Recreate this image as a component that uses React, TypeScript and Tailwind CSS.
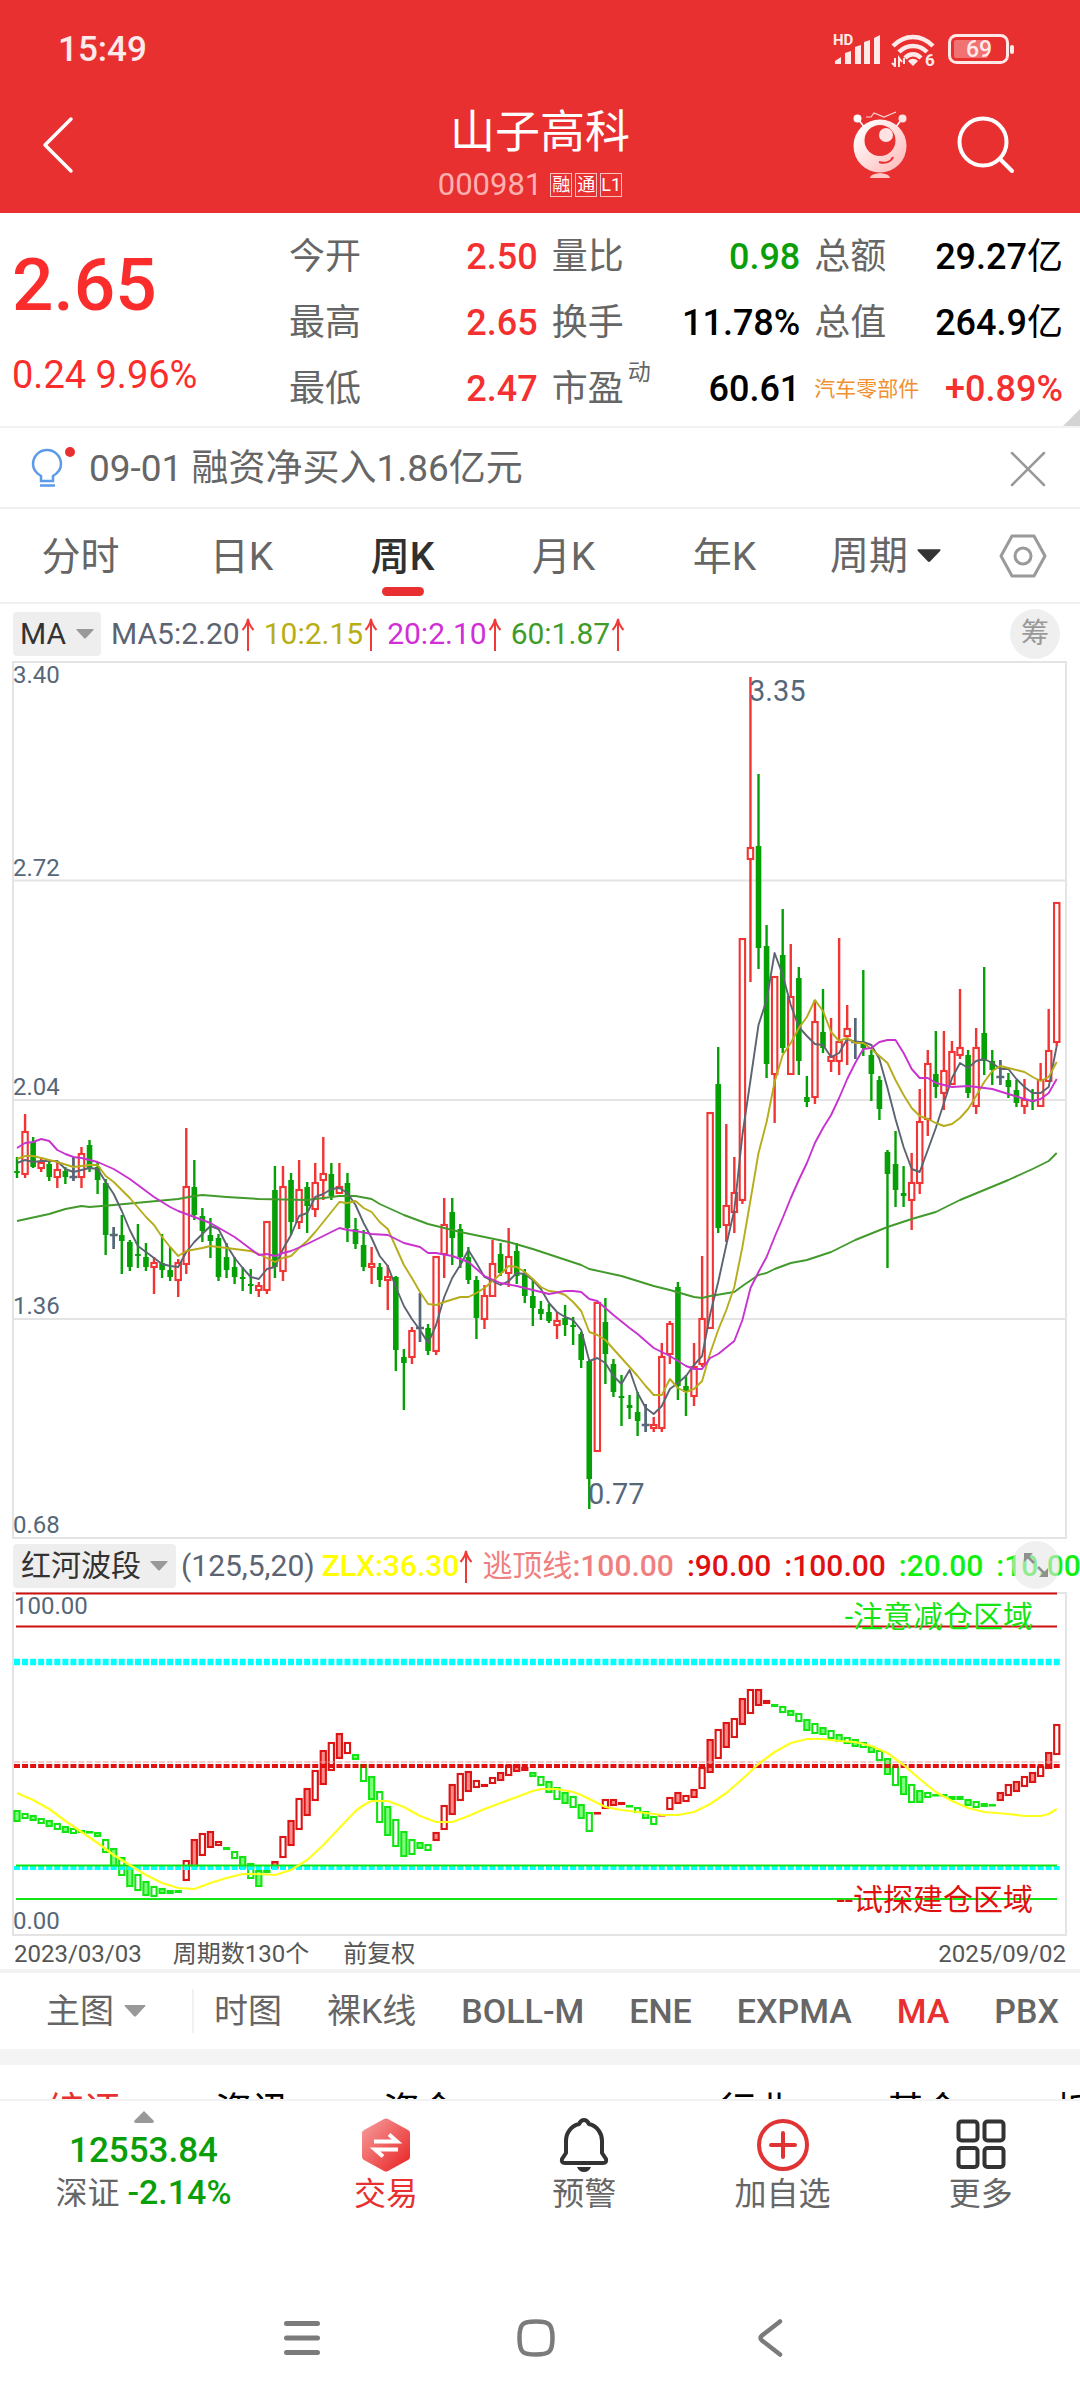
import { useState } from "react";
import type { ReactNode } from "react";

type Tone = "r" | "g" | "d";
// tone, high, body top, body bottom, low
type Candle = [Tone, number, number, number, number];
// tone, top, bottom
type Bar = [Tone, number, number];
// week index, y
type Pt = [number, number];

const CANDLES: Candle[] = [
  ["g", 497, 511, 513, 518], ["r", 454, 472, 514, 518], ["g", 477, 482, 507, 508], ["r", 497, 503, 508, 512], ["g", 501, 504, 517, 521],
  ["r", 501, 510, 517, 528], ["g", 507, 511, 517, 524], ["d", 497, 517, 517, 521], ["r", 487, 494, 517, 528], ["g", 480, 485, 508, 512],
  ["g", 502, 507, 520, 534], ["g", 519, 523, 575, 595], ["d", 567, 575, 575, 589], ["g", 555, 575, 581, 614], ["g", 580, 582, 607, 611],
  ["g", 564, 594, 596, 608], ["g", 583, 597, 607, 611], ["r", 597, 603, 607, 634], ["g", 574, 603, 610, 618], ["g", 587, 610, 617, 621],
  ["r", 599, 603, 620, 637], ["r", 468, 527, 604, 614], ["g", 500, 527, 555, 560], ["g", 548, 556, 571, 582], ["g", 558, 575, 581, 598],
  ["g", 574, 578, 617, 621], ["g", 583, 597, 610, 618], ["g", 597, 607, 617, 624], ["g", 607, 617, 619, 631], ["g", 609, 624, 626, 634],
  ["r", 622, 626, 630, 637], ["r", 562, 562, 630, 634], ["g", 506, 530, 607, 618], ["r", 506, 527, 611, 621], ["g", 513, 520, 562, 575],
  ["r", 500, 530, 562, 569], ["g", 522, 527, 546, 573], ["r", 503, 523, 549, 557], ["r", 477, 514, 520, 540], ["g", 503, 514, 536, 540],
  ["r", 503, 527, 533, 534], ["g", 513, 523, 568, 582], ["g", 558, 569, 584, 589], ["g", 570, 585, 607, 611], ["r", 587, 604, 607, 624],
  ["g", 603, 607, 620, 627], ["r", 605, 617, 620, 650], ["g", 616, 617, 690, 711], ["g", 689, 697, 703, 750], ["r", 667, 671, 697, 704],
  ["d", 633, 668, 668, 682], ["g", 664, 668, 691, 695], ["r", 597, 597, 691, 695], ["r", 538, 565, 594, 618], ["g", 538, 552, 578, 605],
  ["g", 564, 569, 597, 608], ["g", 587, 597, 620, 624], ["g", 616, 620, 658, 679], ["r", 625, 636, 659, 669], ["r", 580, 604, 636, 637],
  ["g", 583, 594, 613, 616], ["r", 568, 597, 613, 627], ["g", 583, 591, 616, 624], ["g", 609, 614, 636, 643], ["g", 619, 636, 648, 666],
  ["g", 641, 649, 654, 660], ["g", 644, 652, 661, 663], ["r", 652, 661, 665, 679], ["g", 645, 658, 665, 676], ["g", 657, 665, 667, 685],
  ["g", 672, 674, 700, 708], ["g", 700, 701, 819, 849], ["r", 642, 643, 791, 791], ["g", 638, 662, 694, 724], ["g", 699, 704, 732, 737],
  ["g", 715, 736, 738, 766], ["g", 735, 745, 748, 759], ["g", 732, 752, 761, 776], ["d", 744, 765, 765, 772], ["r", 757, 765, 768, 772],
  ["r", 683, 697, 768, 772], ["r", 661, 664, 694, 704], ["g", 622, 627, 726, 740], ["g", 715, 726, 732, 756], ["r", 683, 707, 736, 746],
  ["r", 596, 659, 704, 707], ["r", 453, 453, 668, 668], ["g", 387, 424, 568, 573], ["r", 464, 546, 565, 582], ["r", 497, 533, 552, 573],
  ["r", 279, 279, 540, 544], ["r", 17, 188, 199, 322], ["g", 114, 186, 288, 309], ["g", 265, 286, 404, 418], ["r", 317, 317, 414, 463],
  ["g", 249, 295, 388, 393], ["r", 284, 337, 414, 414], ["g", 307, 318, 401, 415], ["g", 416, 437, 442, 447], ["r", 340, 362, 437, 444],
  ["g", 329, 372, 388, 393], ["r", 358, 397, 401, 412], ["r", 278, 382, 401, 415], ["r", 345, 369, 376, 405], ["d", 358, 382, 382, 399],
  ["g", 310, 383, 388, 396], ["g", 390, 395, 414, 441], ["g", 416, 420, 449, 460], ["g", 490, 492, 514, 608], ["g", 471, 504, 530, 547],
  ["g", 506, 533, 536, 547], ["r", 493, 523, 540, 570], ["r", 429, 462, 523, 534], ["r", 390, 404, 459, 476], ["g", 371, 414, 427, 438],
  ["r", 371, 411, 433, 450], ["r", 381, 392, 424, 424], ["r", 329, 388, 395, 399], ["g", 390, 395, 433, 438], ["r", 368, 388, 446, 454],
  ["g", 307, 373, 401, 415], ["g", 390, 401, 410, 425], ["d", 400, 417, 417, 425], ["g", 413, 420, 427, 438], ["g", 420, 430, 443, 447],
  ["r", 419, 440, 446, 454], ["g", 429, 440, 442, 450], ["r", 403, 420, 446, 446], ["r", 349, 391, 421, 421], ["r", 243, 243, 382, 386],
];

const MA5: Pt[] = [
  [0, 503], [1, 500], [2, 502], [3, 501], [5, 501], [6, 509], [7, 512], [8, 510], [9, 508], [10, 509], [11, 522], [12, 534], [13, 551], [14, 570],
  [15, 586], [16, 592], [17, 598], [18, 604], [19, 606], [20, 607], [21, 592], [22, 582], [23, 574], [24, 566], [25, 569], [26, 585], [27, 598],
  [28, 608], [29, 617], [30, 619], [31, 609], [32, 607], [33, 589], [34, 575], [35, 556], [36, 553], [37, 537], [38, 534], [39, 529], [40, 528],
  [41, 533], [42, 545], [43, 563], [44, 578], [45, 596], [46, 606], [47, 627], [48, 646], [49, 659], [50, 670], [51, 683], [52, 665], [53, 637],
  [54, 618], [55, 605], [56, 590], [57, 603], [58, 617], [59, 621], [60, 625], [61, 621], [62, 613], [63, 614], [64, 620], [65, 629], [66, 643],
  [67, 652], [68, 657], [69, 660], [70, 670], [71, 701], [72, 698], [73, 703], [74, 716], [75, 724], [76, 710], [77, 733], [78, 748], [79, 754],
  [80, 746], [81, 729], [82, 723], [83, 716], [84, 705], [85, 696], [86, 654], [87, 622], [88, 585], [89, 550], [90, 475], [91, 420], [92, 365],
  [93, 340], [94, 293], [95, 315], [96, 345], [97, 367], [98, 376], [99, 384], [100, 385], [101, 397], [102, 393], [103, 379], [104, 382],
  [105, 382], [106, 385], [107, 399], [108, 428], [109, 459], [110, 487], [111, 509], [112, 512], [113, 490], [114, 468], [115, 443], [116, 418],
  [117, 403], [118, 408], [119, 401], [120, 399], [121, 403], [122, 409], [123, 409], [124, 419], [125, 427], [126, 433], [127, 433], [128, 427],
  [129, 386],
];

const MA10: Pt[] = [
  [0, 499], [1, 496], [2, 496], [3, 498], [5, 502], [7, 507], [8, 506], [9, 505], [10, 505], [11, 516], [12, 522], [14, 538], [16, 557], [17, 565],
  [18, 577], [19, 587], [20, 596], [21, 591], [23, 588], [24, 586], [26, 588], [29, 591], [30, 594], [31, 598], [32, 602], [33, 598], [34, 596],
  [35, 588], [36, 581], [37, 572], [38, 562], [40, 542], [41, 543], [42, 541], [43, 548], [44, 552], [45, 562], [46, 569], [47, 587], [48, 605],
  [49, 618], [50, 632], [51, 644], [52, 645], [53, 642], [55, 637], [56, 637], [57, 633], [58, 628], [59, 621], [60, 614], [61, 606], [62, 607],
  [63, 612], [64, 619], [65, 627], [66, 631], [67, 632], [68, 635], [69, 642], [70, 651], [71, 672], [72, 675], [73, 680], [74, 689], [76, 707],
  [77, 716], [78, 726], [79, 735], [80, 735], [81, 719], [82, 728], [83, 732], [84, 729], [85, 721], [86, 693], [87, 670], [88, 650], [89, 627],
  [90, 587], [91, 540], [92, 493], [93, 462], [94, 422], [95, 395], [96, 383], [97, 368], [98, 357], [99, 340], [100, 351], [101, 372], [102, 381],
  [103, 378], [104, 383], [105, 383], [106, 389], [107, 396], [108, 403], [109, 420], [110, 435], [111, 448], [112, 456], [113, 459], [114, 463],
  [115, 466], [116, 464], [117, 458], [118, 449], [119, 436], [120, 422], [121, 411], [122, 406], [123, 408], [124, 410], [125, 412], [126, 417],
  [127, 421], [128, 417], [129, 402],
];

const MA20: Pt[] = [
  [0, 488], [1, 483], [2, 482], [3, 479], [4, 481], [5, 490], [6, 494], [7, 497], [8, 498], [10, 502], [12, 509], [14, 519], [17, 537], [19, 547],
  [20, 551], [22, 557], [24, 563], [27, 577], [29, 589], [30, 595], [31, 594], [32, 596], [33, 593], [34, 591], [36, 584], [38, 576], [40, 568],
  [41, 570], [42, 571], [44, 574], [46, 575], [48, 583], [50, 587], [51, 593], [52, 593], [54, 596], [56, 602], [58, 616], [60, 623], [62, 626],
  [64, 630], [66, 634], [68, 631], [69, 631], [70, 632], [71, 639], [72, 641], [74, 655], [76, 668], [77, 674], [79, 688], [81, 696], [83, 706],
  [84, 709], [85, 709], [86, 698], [87, 694], [89, 681], [90, 660], [91, 628], [92, 612], [93, 597], [94, 577], [95, 558], [96, 538], [97, 520],
  [98, 503], [99, 483], [100, 468], [101, 455], [102, 438], [103, 419], [104, 403], [105, 389], [106, 388], [107, 382], [108, 380], [109, 380],
  [110, 393], [111, 409], [112, 418], [113, 418], [114, 423], [116, 427], [118, 426], [121, 429], [123, 434], [125, 439], [126, 441], [127, 439],
  [128, 433], [129, 419],
];

const MA60: Pt[] = [
  [0, 561], [4, 554], [6, 549], [8, 546], [9, 547], [12, 545], [16, 542], [20, 539], [22, 536], [23, 535], [26, 537], [30, 539], [36, 540], [38, 538],
  [40, 536], [42, 536], [44, 539], [45, 544], [48, 555], [51, 564], [55, 572], [58, 577], [61, 582], [64, 589], [70, 605], [71, 609], [75, 616],
  [79, 626], [81, 630], [84, 637], [85, 638], [86, 636], [89, 632], [90, 626], [92, 615], [93, 613], [94, 609], [96, 603], [98, 600], [101, 592],
  [104, 580], [108, 567], [111, 559], [114, 552], [117, 540], [120, 530], [123, 520], [126, 509], [128, 501], [129, 493],
];

const BARS: Bar[] = [
  ["g", 220, 232], ["g", 223, 229], ["g", 225, 231], ["g", 228, 234], ["g", 230, 237], ["g", 233, 240], ["g", 236, 243], ["g", 238, 244],
  ["g", 240, 243], ["g", 241, 243], ["g", 242, 247], ["g", 249, 263], ["g", 258, 277], ["g", 267, 286], ["g", 276, 297], ["g", 284, 301],
  ["g", 291, 306], ["g", 296, 307], ["g", 298, 304], ["g", 300, 304], ["g", 300, 303], ["r", 270, 291], ["r", 249, 277], ["r", 243, 266],
  ["r", 241, 258], ["r", 251, 256], ["g", 257, 260], ["g", 261, 269], ["g", 266, 279], ["g", 273, 289], ["g", 280, 297], ["g", 280, 283],
  ["r", 271, 279], ["r", 246, 268], ["r", 230, 256], ["r", 208, 240], ["r", 198, 226], ["r", 180, 211], ["r", 160, 195], ["r", 152, 181],
  ["r", 143, 169], ["r", 152, 164], ["g", 164, 170], ["g", 174, 192], ["g", 186, 210], ["g", 201, 233], ["g", 216, 246], ["g", 229, 257],
  ["g", 241, 267], ["g", 249, 265], ["g", 252, 259], ["g", 254, 261], ["r", 242, 251], ["r", 215, 240], ["r", 194, 225], ["r", 183, 211],
  ["r", 181, 202], ["r", 190, 198], ["r", 194, 197], ["r", 187, 194], ["r", 182, 191], ["r", 175, 186], ["r", 174, 182], ["r", 177, 181],
  ["g", 182, 187], ["g", 186, 196], ["g", 191, 203], ["g", 197, 210], ["g", 202, 214], ["g", 206, 218], ["g", 214, 229], ["g", 222, 242],
  ["r", 222, 224], ["r", 209, 219], ["r", 209, 216], ["r", 212, 215], ["g", 215, 217], ["g", 217, 223], ["g", 221, 229], ["g", 226, 235],
  ["r", 224, 226], ["r", 207, 220], ["r", 202, 214], ["r", 205, 212], ["r", 199, 208], ["r", 177, 199], ["r", 149, 183], ["r", 139, 169],
  ["r", 132, 158], ["r", 128, 148], ["r", 108, 135], ["r", 99, 124], ["r", 99, 116], ["r", 110, 114], ["g", 114, 117], ["g", 116, 123],
  ["g", 120, 126], ["g", 123, 132], ["g", 129, 141], ["g", 133, 144], ["g", 137, 145], ["g", 140, 149], ["g", 144, 152], ["g", 147, 154],
  ["g", 149, 157], ["g", 152, 158], ["g", 156, 163], ["g", 160, 171], ["g", 168, 185], ["g", 176, 196], ["g", 186, 205], ["g", 194, 213],
  ["g", 200, 213], ["g", 202, 208], ["g", 204, 206], ["g", 204, 206], ["g", 206, 210], ["g", 206, 210], ["g", 209, 216], ["g", 211, 218],
  ["g", 213, 217], ["g", 214, 215], ["r", 202, 211], ["r", 194, 206], ["r", 191, 202], ["r", 186, 197], ["r", 182, 193], ["r", 176, 187],
  ["r", 162, 179], ["r", 134, 165],
];

const ZLX: Pt[] = [
  [0, 203], [2, 210], [4, 219], [6, 231], [8, 242], [10, 253], [12, 265], [14, 275], [16, 285], [18, 293], [20, 298], [22, 299], [24, 293], [26, 288],
  [28, 284], [30, 284], [32, 285], [34, 280], [36, 270], [38, 255], [40, 238], [42, 221], [43, 215], [44, 211], [46, 211], [48, 217], [50, 226],
  [52, 232], [54, 232], [56, 226], [58, 219], [60, 213], [62, 207], [64, 201], [65, 199], [67, 199], [69, 202], [70, 205], [72, 213], [73, 217],
  [75, 220], [78, 223], [80, 225], [82, 225], [84, 222], [86, 214], [88, 203], [90, 189], [92, 174], [94, 162], [96, 153], [98, 149], [100, 149],
  [102, 151], [104, 152], [106, 156], [108, 163], [110, 175], [112, 189], [114, 202], [116, 211], [118, 218], [120, 222], [123, 224], [125, 226],
  [127, 226], [128, 224], [129, 219],
];

const STEP = 8.06;
const xAt = (i: number) => 17 + STEP * i;
const toPoints = (pts: Pt[]) => pts.map(([i, y]) => `${xAt(i).toFixed(1)},${y}`).join(" ");

const QUOTES: { label: string; sup?: string; value: string; unit?: string; color: string; small?: boolean }[] = [
  { label: "今开", value: "2.50", color: "text-[#f43030]" },
  { label: "量比", value: "0.98", color: "text-[#0a9f0a]" },
  { label: "总额", value: "29.27", unit: "亿", color: "text-black" },
  { label: "最高", value: "2.65", color: "text-[#f43030]" },
  { label: "换手", value: "11.78%", color: "text-black" },
  { label: "总值", value: "264.9", unit: "亿", color: "text-black" },
  { label: "最低", value: "2.47", color: "text-[#f43030]" },
  { label: "市盈", sup: "动", value: "60.61", color: "text-black" },
  { label: "汽车零部件", value: "+0.89%", color: "text-[#f43030]", small: true },
];

const PERIODS = ["分时", "日K", "周K", "月K", "年K"];

const MAS = [
  { text: "MA5:2.20", color: "text-[#5c6472]" },
  { text: "10:2.15", color: "text-[#b8ae14]" },
  { text: "20:2.10", color: "text-[#d02ed6]" },
  { text: "60:1.87", color: "text-[#3f9c28]" },
];

const INDICATORS = [
  { name: "时图", latin: false },
  { name: "裸K线", latin: false },
  { name: "BOLL-M", latin: true },
  { name: "ENE", latin: true },
  { name: "EXPMA", latin: true },
  { name: "MA", latin: true },
  { name: "PBX", latin: true },
];

export default function App() {
  return (
    <div className="flex min-h-screen w-full flex-col overflow-x-hidden bg-white font-[Roboto,'Noto_Sans_CJK_SC',sans-serif] text-[#666]">
      <Header />
      <main>
        <Quote />
        <Tip />
        <PeriodTabs />
        <MainLegend />
        <KLine />
        <SubLegend />
        <WaveChart />
        <div className="flex h-[35px] items-center border-b-4 border-[#f2f2f2] px-[14px] text-[24px] leading-[28px] text-[#555]">
          <span>2023/03/03</span>
          <span className="ml-[31px]">周期数130个</span>
          <span className="ml-[34px]">前复权</span>
          <span className="ml-auto">2025/09/02</span>
        </div>
        <IndicatorTabs />
        <div className="h-4 bg-[#f4f4f4]" />
        <NewsTabs />
      </main>
      <BottomBar />
      <SystemNav />
    </div>
  );
}

function Header() {
  return (
    <header className="h-[213px] bg-[#e83030] text-white">
      <div className="flex h-[100px] items-center justify-between pr-[65px] pl-[58px]">
        <span className="text-[35px] font-medium text-white/90">15:49</span>
        <StatusIcons />
      </div>
      <div className="grid grid-cols-[1fr_auto_1fr] items-start pt-[5px]">
        <button aria-label="返回" className="mt-[11px] ml-[42px] w-[32px]">
          <svg viewBox="0 0 32 58" className="w-full" fill="none" stroke="#fff" strokeWidth="3.5" strokeLinecap="round" strokeLinejoin="round">
            <path d="M29 3 3 29l26 26" />
          </svg>
        </button>
        <div className="flex flex-col items-center">
          <h1 className="text-[45px] leading-[56px]">山子高科</h1>
          <div className="mt-[6px] flex items-center gap-[3px] pr-[20px] leading-[36px]">
            <span className="mr-[5px] text-[31px] text-[#ffb0b0]">000981</span>
            {["融", "通", "L1"].map((t) => (
              <span key={t} className="flex h-[24px] w-[22px] items-center justify-center border border-white/70 text-[18px] leading-[22px]">{t}</span>
            ))}
          </div>
        </div>
        <div className="mt-[6px] flex items-center justify-end gap-[50px] pr-[65px]">
          <button aria-label="智能助手"><Robot /></button>
          <button aria-label="搜索">
            <svg width="58" height="58" viewBox="0 0 58 58" fill="none" stroke="#fff" strokeWidth="4" strokeLinecap="round">
              <circle cx="26" cy="26" r="23.5" />
              <path d="m43 43 12 12" />
            </svg>
          </button>
        </div>
      </div>
    </header>
  );
}

function StatusIcons() {
  return (
    <svg width="182" height="34" viewBox="0 0 182 34" fill="#ffe9e9">
      <text x="0" y="12" fontSize="15" fontWeight="700">HD</text>
      <path d="M2 31v-3l6-4v7zM12 31V20l6-2v13zM22 31V14l6-2v19zM31 31V9l6-2v24zM41 31V5l6-3v29z" />
      <g fill="none" stroke="#ffe9e9" strokeWidth="4.5">
        <path d="M60 13c12-12 28-12 40 0" />
        <path d="M66 19c8-8 20-8 28 0" />
        <path d="M72 25c5-5 11-5 16 0" />
      </g>
      <path d="M75 28c3-3 7-3 10 0l-5 5z" />
      <path d="M62 25v9M59 30l3 3M66 34v-9l3 4M71 25v6" stroke="#ffe9e9" strokeWidth="2" fill="none" />
      <text x="92" y="33" fontSize="17" fontWeight="700">6</text>
      <rect x="116.5" y="2.5" width="58" height="27" rx="7" fill="none" stroke="#ffe9e9" strokeWidth="3" />
      <rect x="121" y="7" width="34" height="18" rx="2" fill="#f07272" />
      <rect x="177" y="12" width="4" height="9" rx="2" />
      <text x="146" y="24" fontSize="23" fontWeight="500" textAnchor="middle">69</text>
    </svg>
  );
}

function Robot() {
  return (
    <svg width="54" height="68" viewBox="0 0 54 68">
      <defs>
        <linearGradient id="robot" x1="0" y1="0" x2="1" y2="1">
          <stop offset="0.1" stopColor="#fff" />
          <stop offset="1" stopColor="#ffb5b5" />
        </linearGradient>
      </defs>
      <g fill="none" stroke="#fff">
        <path d="m5 8 7 9M49 8l-7 9" strokeWidth="1.5" />
        <path d="M13 6h5l3-4 10 4 12-5" strokeWidth="1.2" opacity="0.8" />
      </g>
      <circle cx="4.5" cy="7.5" r="4" fill="#fff" />
      <circle cx="49.5" cy="7.5" r="4" fill="#ffe3e3" />
      <circle cx="27" cy="35" r="26.5" fill="url(#robot)" />
      <circle cx="27" cy="29.5" r="15.5" fill="#e83030" />
      <circle cx="33" cy="24" r="7" fill="#ffe3e3" />
      <path d="M26 51c6 2 12 0 14-5" fill="none" stroke="#e83030" strokeWidth="2" />
      <path d="M17 67q0-4 10-5 10 1 10 5z" fill="#ffc9c9" />
    </svg>
  );
}

function Quote() {
  return (
    <section className="relative flex h-[215px] border-b-2 border-[#f2f2f2]">
      <div className="w-[289px] shrink-0 pt-[32px] pl-[12px] text-[#fa2c2c]">
        <div className="text-[73px] leading-[80px] font-medium">2.65</div>
        <div className="mt-[28px] text-[38px] leading-[44px]">0.24 9.96%</div>
      </div>
      <dl className="grid flex-1 grid-cols-3 content-start gap-x-[14px] pt-[11px] pr-[17px] text-[36px] leading-[66px]">
        {QUOTES.map((q) => (
          <div key={q.label} className="flex justify-between whitespace-nowrap">
            <dt className={q.small ? "text-[21px] text-[#f09030]" : "flex text-[#666]"}>
              {q.label}
              {q.sup && <span className="ml-[4px] text-[23px] leading-[34px]">{q.sup}</span>}
            </dt>
            <dd className={q.color}><span className="font-medium">{q.value}</span>{q.unit}</dd>
          </div>
        ))}
      </dl>
      <svg className="absolute right-0 bottom-0" width="17" height="17" viewBox="0 0 17 17"><path d="M17 0v17H0z" fill="#d4d4d4" /></svg>
    </section>
  );
}

function Tip() {
  return (
    <section className="flex h-[81px] items-center border-b-2 border-[#f0f0f0] pt-[2px] pr-[34px] pl-[31px]">
      <svg width="46" height="44" viewBox="0 0 46 44" fill="none" stroke="#5b9bea" strokeWidth="2.5">
        <path d="M10 34v-5C5 26 2 22 2 17a14 14 0 0 1 28 0c0 5-3 9-8 12v5zM9 38.5h15" />
        <circle cx="39" cy="5" r="5" fill="#e83030" stroke="none" />
      </svg>
      <p className="ml-[12px] text-[37px] leading-[44px]">09-01 融资净买入1.86亿元</p>
      <button aria-label="关闭" className="ml-auto">
        <svg width="36" height="36" viewBox="0 0 36 36" stroke="#999" strokeWidth="2.5" strokeLinecap="round"><path d="m2 2 32 32M34 2 2 34" /></svg>
      </button>
    </section>
  );
}

function PeriodTabs() {
  const [active, setActive] = useState("周K");
  return (
    <nav className="flex h-[95px] border-b-2 border-[#f0f0f0] text-[39px] leading-[96px]">
      {PERIODS.map((p) => (
        <button key={p} onClick={() => setActive(p)} className={`relative w-[161px] shrink-0 ${active === p ? "font-medium text-[#303030]" : "text-[#666]"}`}>
          {p}
          {active === p && <span className="absolute bottom-[6px] left-1/2 h-[9px] w-[42px] -translate-x-1/2 rounded-full bg-[#e83030]" />}
        </button>
      ))}
      <div className="flex w-[161px] shrink-0 items-center justify-center">
        <Picker label="更多周期" value="周期" className="pr-[32px]" caret="fill-[#333]" size={24} />
      </div>
      <button aria-label="图表设置" className="flex flex-1 items-center justify-center">
        <svg width="48" height="44" viewBox="0 0 48 44" fill="none" stroke="#9a9a9a" strokeWidth="3" strokeLinejoin="round">
          <path d="M13 2h22l11 20-11 20H13L2 22z" />
          <circle cx="24" cy="22" r="8" />
        </svg>
      </button>
    </nav>
  );
}

function Picker({ label, value, className, caret = "fill-[#999]", size = 18 }: { label: string; value: string; className: string; caret?: string; size?: number }) {
  return (
    <div className="relative flex items-center">
      <select aria-label={label} className={`appearance-none bg-transparent outline-none ${className}`}>
        <option>{value}</option>
      </select>
      <svg width={size} height={size} viewBox="0 0 18 18" className={`pointer-events-none absolute right-0 ${caret}`}>
        <path d="M1 4h16q1 0 .5 1l-7.5 8q-1 1-2 0L.5 5Q0 4 1 4z" />
      </svg>
    </div>
  );
}

function Up() {
  return (
    <svg width="14" height="34" viewBox="0 0 14 34" fill="none" stroke="#f03a3a" strokeWidth="2" className="shrink-0">
      <path d="M7 34V2M1.5 13Q6 8 7 2q1 6 5.5 11" />
    </svg>
  );
}

function MainLegend() {
  return (
    <div className="flex h-[56px] items-center pt-[4px] pr-[20px] pl-[13px] text-[30px] leading-[44px]">
      <div className="rounded bg-[#eee] px-[7px] text-[#333]">
        <Picker label="主图指标" value="MA" className="pr-[27px]" />
      </div>
      <div className="ml-[10px] flex gap-[9px]">
        {MAS.map((m) => (
          <span key={m.text} className={`flex items-center gap-[1px] ${m.color}`}>{m.text}<Up /></span>
        ))}
      </div>
      <button className="ml-auto size-[50px] rounded-full bg-[#efefef] text-[28px] leading-[50px] text-[#999]">筹</button>
    </div>
  );
}

const CANDLE_COLOR = { r: "#f23434", g: "#05a005", d: "#566778" };

function KLine() {
  return (
    <svg viewBox="0 0 1080 879" className="block w-full" role="img" aria-label="周K线图">
      <g fill="none" stroke="#e4e4e4" strokeWidth="2">
        <rect x="13" y="2" width="1053" height="876" />
        <path d="M13 220.5h1053M13 440h1053M13 659h1053" />
      </g>
      <g fill="#566778" fontSize="24">
        <text x="13" y="23">3.40</text>
        <text x="13" y="216">2.72</text>
        <text x="13" y="435">2.04</text>
        <text x="13" y="654">1.36</text>
        <text x="13" y="873">0.68</text>
      </g>
      {CANDLES.map(([t, high, top, bottom, low], i) => {
        const x = xAt(i);
        const c = CANDLE_COLOR[t];
        return (
          <g key={i} stroke={c} strokeWidth="2.4" fill="none">
            <path d={`M${x} ${high}V${top}M${x} ${bottom}V${low}`} />
            {t === "r" && <rect x={x - 2.7} y={top} width="5.4" height={bottom - top} strokeWidth="2.1" />}
            {t === "g" && <rect x={x - 2.8} y={top} width="5.6" height={Math.max(bottom - top, 2)} fill={c} stroke="none" />}
            {t === "d" && <path d={`M${x} ${high}V${low}M${x - 4} ${top}h8`} />}
          </g>
        );
      })}
      <g fill="none" strokeWidth="1.9" strokeLinejoin="round">
        <polyline points={toPoints(MA60)} stroke="#429a2c" />
        <polyline points={toPoints(MA5)} stroke="#5c6472" />
        <polyline points={toPoints(MA10)} stroke="#b6ac1c" />
        <polyline points={toPoints(MA20)} stroke="#c833d0" />
      </g>
      <g fill="#566778" fontSize="29">
        <text x="749" y="41">3.35</text>
        <text x="588" y="844">0.77</text>
      </g>
    </svg>
  );
}

function SubLegend() {
  return (
    <div className="relative flex h-[51px] items-center overflow-hidden pt-[2px] pl-[13px] text-[30px] leading-[44px] whitespace-nowrap">
      <div className="rounded bg-[#eee] px-[8px] text-[#333]">
        <Picker label="副图指标" value="红河波段" className="pr-[27px]" />
      </div>
      <span className="ml-[5px] text-[#5c6472]">(125,5,20)</span>
      <span className="ml-[7px] flex items-center font-medium text-[#ff0]">ZLX:36.30<Up /></span>
      <span className="ml-[9px] text-[#f08080]">逃顶线<span className="font-medium">:100.00</span></span>
      <span className="ml-[13px] font-medium text-[#e01010]">:90.00</span>
      <span className="ml-[13px] font-medium text-[#e01010]">:100.00</span>
      <span className="ml-[13px] font-medium text-[#10f010]">:20.00</span>
      <span className="ml-[13px] font-medium text-[#10f010]">:10.00</span>
      <button aria-label="全屏" className="absolute top-[2px] right-[20px] flex size-[48px] items-center justify-center rounded-full bg-[#e6e6e6]/60">
        <svg width="28" height="28" viewBox="0 0 28 28" fill="#909090" stroke="#909090" strokeWidth="2.5">
          <path d="m3 3 9 9M25 25l-9-9" />
          <path d="M2 2h9l-9 9zM26 26h-9l9-9z" stroke="none" />
        </svg>
      </button>
    </div>
  );
}

function WaveChart() {
  return (
    <svg viewBox="0 0 1080 348" className="block w-full" role="img" aria-label="红河波段">
      <rect x="13" y="3" width="1053" height="342" fill="none" stroke="#e4e4e4" strokeWidth="2" />
      {BARS.map(([t, top, bottom], i) => (
        <rect
          key={i}
          x={xAt(i) - 2.6}
          y={top + 1}
          width="5.2"
          height={Math.max(bottom - top - 2, 0.5)}
          strokeWidth="2.1"
          stroke={t === "r" ? "#dc1414" : "#14e414"}
          fill={i % 2 ? "none" : t === "r" ? "#ff8a8a" : "#7dff7d"}
        />
      ))}
      <g strokeWidth="2.2" fill="none">
        <path d="M16 3.5H1057M16 36.5H1057" stroke="#cc1010" />
        <path d="M14 72H1060" stroke="#0ff" strokeWidth="6.5" strokeDasharray="6 2.06" />
        <path d="M14 172H1060" stroke="#e0a0a0" strokeWidth="1" strokeDasharray="6 2.06" />
        <path d="M14 176H1060" stroke="#e01010" strokeWidth="4" strokeDasharray="6 2.06" />
        <path d="M14 278H1060" stroke="#0ff" strokeWidth="4" strokeDasharray="6 2.06" />
        <path d="M16 275.5H1057M16 309H1057" stroke="#14e414" />
        <polyline points={toPoints(ZLX)} stroke="#ffff1e" strokeLinejoin="round" />
      </g>
      <g fill="#566778" fontSize="24">
        <text x="14" y="24">100.00</text>
        <text x="13" y="339">0.00</text>
      </g>
      <g fontSize="30" textAnchor="end">
        <text x="1033" y="37" fill="#14e414">-注意减仓区域</text>
        <text x="1033" y="320" fill="#e01010">--试探建仓区域</text>
      </g>
    </svg>
  );
}

function IndicatorTabs() {
  const [active, setActive] = useState("MA");
  return (
    <div className="flex h-[76px] items-center overflow-hidden text-[34px] leading-[44px] whitespace-nowrap">
      <div className="flex w-[194px] shrink-0 border-r-2 border-[#f2f2f2] pl-[46px]">
        <Picker label="选择图层" value="主图" className="pr-[32px]" size={22} />
      </div>
      <div className="flex flex-1 justify-between pr-[21px] pl-[20px]">
        {INDICATORS.map(({ name, latin }) => (
          <button key={name} onClick={() => setActive(name)} className={`${latin ? "font-medium" : ""} ${active === name ? "text-[#e83030]" : "text-[#666]"}`}>{name}</button>
        ))}
      </div>
    </div>
  );
}

function NewsTabs() {
  return (
    <div className="flex h-[36px] overflow-hidden border-b-2 border-[#f2f2f2] text-[37px] leading-[44px] text-black">
      {["综评", "资讯", "资金", "", "行业", "基金", "板块"].map((t, i) => (
        <a key={i} href="#" className={`w-[168px] shrink-0 pt-[25px] text-center ${i === 0 ? "text-[#e83030]" : ""}`}>{t}</a>
      ))}
    </div>
  );
}

function BottomBar() {
  return (
    <footer className="flex h-[125px] pt-[10px] text-[32px] leading-[42px]">
      <a href="#" className="flex w-[287px] shrink-0 flex-col items-center">
        <svg width="20" height="12" viewBox="0 0 20 12"><path d="M10 0 20 10q0 2-2 2H2q-2 0-2-2z" fill="#999" /></svg>
        <span className="mt-[8px] text-[35px] leading-[40px] font-medium text-[#0a9f0a]">12553.84</span>
        <span>深证 <span className="text-[34px] font-medium text-[#0a9f0a]">-2.14%</span></span>
      </a>
      <Action label="交易" red>
        <defs>
          <linearGradient id="trade" x1="0" y1="0" x2="1" y2="1">
            <stop offset="0" stopColor="#f7a0a0" />
            <stop offset="1" stopColor="#e82020" />
          </linearGradient>
        </defs>
        <path d="M27 2q2-1 4 0l20 11q2 1 2 3v24q0 2-2 3L31 54q-2 1-4 0L7 43q-2-1-2-3V16q0-2 2-3z" fill="url(#trade)" />
        <path d="M17 24.5h23l-8-7M41 32.5H18l8 7" fill="none" stroke="#fff" strokeWidth="4" />
      </Action>
      <Action label="预警">
        <path d="M29 3c3 0 4 2 5 4 8 2 13 9 13 17v12l4 6q1 4-3 4H10q-4 0-3-4l4-6V24c0-8 5-15 13-17 1-2 2-4 5-4z" fill="none" stroke="#333" strokeWidth="4" strokeLinejoin="round" />
        <path d="M22 50h14q-2 5-7 5t-7-5z" fill="#333" />
      </Action>
      <Action label="加自选">
        <g fill="none" stroke="#e03434" strokeWidth="4" strokeLinecap="round">
          <circle cx="29" cy="28" r="24" />
          <path d="M29 16v24M17 28h24" />
        </g>
      </Action>
      <Action label="更多">
        <g fill="none" stroke="#333" strokeWidth="4">
          <rect x="6.5" y="4.5" width="19" height="19" rx="3" />
          <rect x="32.5" y="4.5" width="19" height="19" rx="3" />
          <rect x="6.5" y="31" width="19" height="19" rx="3" />
          <rect x="32.5" y="31" width="19" height="19" rx="3" />
        </g>
      </Action>
    </footer>
  );
}

function Action({ label, red, children }: { label: string; red?: boolean; children: ReactNode }) {
  return (
    <button className={`flex flex-1 flex-col items-center pt-[6px] ${red ? "text-[#e83030]" : ""}`}>
      <svg width="58" height="56" viewBox="0 0 58 56">{children}</svg>
      {label}
    </button>
  );
}

function SystemNav() {
  return (
    <div className="mt-auto flex items-center justify-center gap-[196px] pr-[8px] pb-[43px]">
      <button aria-label="任务">
        <svg width="38" height="38" viewBox="0 0 38 38" stroke="#7b7b7b" strokeWidth="5" strokeLinecap="round"><path d="M3.500 4.500h31M3.500 19h31M3.500 33.500h31" /></svg>
      </button>
      <button aria-label="主页">
        <svg width="38" height="38" viewBox="0 0 38 38" fill="none" stroke="#7b7b7b" strokeWidth="4.5"><path d="M19 2.500c13 0 16.500 2 16.500 16.500S32 35.500 19 35.500 2.500 34 2.500 19 6 2.500 19 2.500z" /></svg>
      </button>
      <button aria-label="后退">
        <svg width="38" height="38" viewBox="0 0 38 38" fill="none" stroke="#7b7b7b" strokeWidth="4.5" strokeLinecap="round"><path d="M29 2.500 11 16.500q-3 2.500 0 5l18 14" /></svg>
      </button>
    </div>
  );
}
